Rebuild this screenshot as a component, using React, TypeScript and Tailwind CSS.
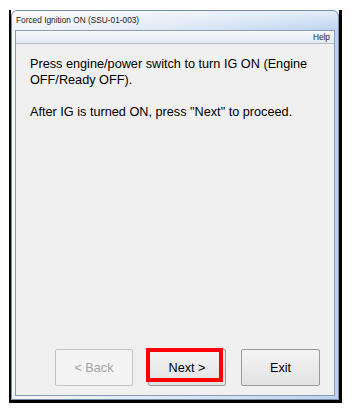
import React from "react";

export default function App() {
  const font = { fontFamily: '"Liberation Sans", Arial, sans-serif' };
  return (
    <div className="w-[352px] h-[412px] bg-white overflow-hidden" style={font}>
      <div className="ml-[9px] mt-[10px] w-[333px] h-[393px] border-l-2 border-r-[3px] border-b-[3px] border-black">
        <div className="w-full h-full rounded-t-[6px] border border-[#7a8ea8] bg-gradient-to-r from-[#f3f6fa] via-[#dde8f5] to-[#bcd3ee] flex flex-col">
          <div className="h-[19px] shrink-0 flex items-center pl-[4px] text-[8.3px] text-[#1a1a1a] bg-gradient-to-b from-white/60 to-transparent rounded-t-[6px]">
            Forced Ignition ON (SSU-01-003)
          </div>
          <div className="flex-1 mx-[3px] mb-[3px] border border-[#8a9bb3] flex flex-col bg-[#f0f0f0]">
            <div className="h-[13px] shrink-0 flex items-center justify-end pr-[4px] text-[8.3px] text-[#222] bg-gradient-to-b from-[#f7f9fc] to-[#e4eaf3] border-b border-[#b4bcc8]">
              Help
            </div>
            <div className="flex-1 flex flex-col pl-[14px] pt-[12px] text-[12.7px] leading-[16px] text-black">
              <p>Press engine/power switch to turn IG ON (Engine<br />OFF/Ready OFF).</p>
              <p className="mt-[16px]">After IG is turned ON, press "Next" to proceed.</p>
              <div className="mt-auto mb-[9px] flex gap-[15px] pl-[25px]">
                <button className="w-[78px] h-[37px] rounded-[2px] border border-[#c2c2c2] bg-[#f4f4f4] text-[12.7px] text-[#a3a3a3]">
                  &lt; Back
                </button>
                <div className="relative w-[78px] h-[37px]">
                  <button className="w-full h-full rounded-[2px] border border-[#9a9a9a] bg-gradient-to-b from-[#f4f4f4] to-[#e2e2e2] text-[12.7px] text-black">
                    Next &gt;
                  </button>
                  <div className="absolute left-[-2px] top-[-1px] w-[77px] h-[34px] border-[4px] border-[#ff0000]" />
                </div>
                <button className="w-[79px] h-[37px] rounded-[2px] border border-[#9a9a9a] bg-gradient-to-b from-[#f4f4f4] to-[#e2e2e2] text-[12.7px] text-black">
                  Exit
                </button>
              </div>
            </div>
          </div>
        </div>
      </div>
    </div>
  );
}
